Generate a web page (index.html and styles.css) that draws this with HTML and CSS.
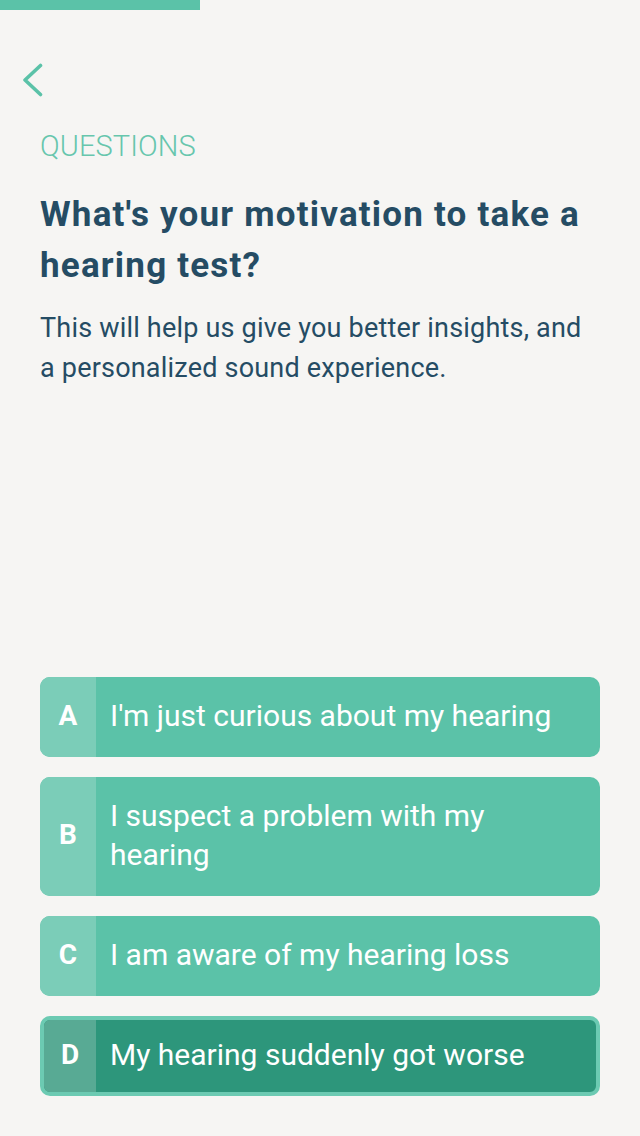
FILE: index.html
```html
<!DOCTYPE html>
<html lang="en">
<head>
<meta charset="utf-8">
<title>Questions</title>
<link rel="stylesheet" href="styles.css">
</head>
<body>
<div class="screen">
  <div class="progress"><div class="progress-fill"></div></div>
  <nav class="nav">
    <button class="back" aria-label="Back">
      <svg width="22" height="34" viewBox="0 0 22 34"><polyline points="18.5,2.5 3,17 18.5,31.5" fill="none" stroke="#5bc2a8" stroke-width="3.6" stroke-linecap="round" stroke-linejoin="round"/></svg>
    </button>
  </nav>
  <main class="content">
    <div class="eyebrow">QUESTIONS</div>
    <h1 class="title">What's your motivation to take a hearing test?</h1>
    <p class="desc">This will help us give you better insights, and a personalized sound experience.</p>
    <div class="options">
      <div class="option"><span class="key">A</span><span class="label">I'm just curious about my hearing</span></div>
      <div class="option"><span class="key">B</span><span class="label">I suspect a problem with my hearing</span></div>
      <div class="option"><span class="key">C</span><span class="label">I am aware of my hearing loss</span></div>
      <div class="option selected"><span class="key">D</span><span class="label">My hearing suddenly got worse</span></div>
    </div>
  </main>
</div>
</body>
</html>
```
FILE: styles.css
```css
* { box-sizing: border-box; }
html, body { margin: 0; padding: 0; }
body {
  background: #f6f5f3;
  font-family: Roboto, "Noto Sans", sans-serif;
  color: #254c64;
}
.screen {
  min-height: 1136px;
  display: flex;
  flex-direction: column;
}
.progress { height: 10px; }
.progress-fill { width: 200px; height: 10px; background: #5bc2a8; }
.nav { padding: 53px 0 0 22px; height: 87px; }
.back {
  display: block;
  padding: 0;
  margin: 0;
  border: 0;
  background: none;
  width: 22px;
  height: 34px;
}
.back svg { display: block; }
.content {
  flex: 1;
  display: flex;
  flex-direction: column;
  padding: 31px 40px 40px 40px;
}
.eyebrow {
  font-size: 29px;
  line-height: 36px;
  font-weight: 300;
  letter-spacing: 0.1px;
  color: #67c6ad;
}
.title {
  margin: 25px 0 0 0;
  font-size: 35px;
  line-height: 51px;
  font-weight: 700;
  letter-spacing: 1.2px;
  color: #254c64;
}
.desc {
  margin: 17px 0 0 0;
  font-size: 27px;
  line-height: 40px;
  font-weight: 400;
  letter-spacing: 0.2px;
  color: #254c64;
}
.options {
  margin-top: auto;
  display: flex;
  flex-direction: column;
  gap: 20px;
}
.option {
  display: flex;
  min-height: 80px;
  border-radius: 10px;
  background: #5bc2a8;
  color: #fff;
  overflow: hidden;
}
.key {
  flex: 0 0 56px;
  display: flex;
  align-items: center;
  justify-content: center;
  padding-bottom: 4px;
  background: #7bcdb8;
  font-size: 28px;
  font-weight: 700;
}
.label {
  flex: 1;
  align-self: center;
  padding: 18.5px 20px 22.5px 14px;
  font-size: 30px;
  line-height: 39px;
  letter-spacing: 0;
}
.option.selected {
  background: #2d967b;
  border: 4px solid #6ccab2;
}
.option.selected .key {
  flex-basis: 52px;
  background: #58aa94;
}
.option.selected .label {
  padding: 14.5px 16px 18.5px 14px;
}
```
